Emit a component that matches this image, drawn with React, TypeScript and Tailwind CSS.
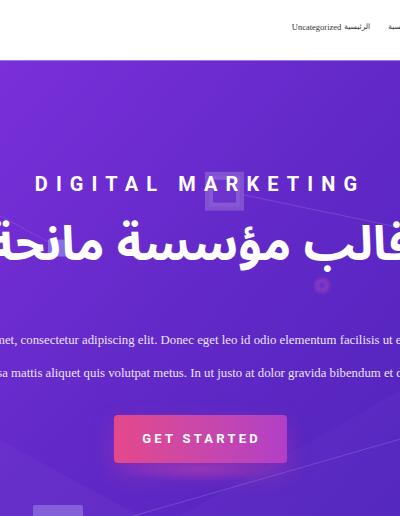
import React from "react";

function HeroShapes() {
  return (
    <svg
      className="absolute inset-0 h-full w-full"
      viewBox="0 0 400 456"
      preserveAspectRatio="none"
      aria-hidden="true"
    >
      <defs>
        <radialGradient id="ring" cx="50%" cy="50%" r="50%">
          <stop offset="0%" stopColor="#7a3fd0" stopOpacity="0.2" />
          <stop offset="45%" stopColor="#d05ab8" stopOpacity="0.35" />
          <stop offset="100%" stopColor="#d05ab8" stopOpacity="0" />
        </radialGradient>
        <radialGradient id="glow" cx="50%" cy="50%" r="50%">
          <stop offset="0%" stopColor="#e050a8" stopOpacity="0.3" />
          <stop offset="100%" stopColor="#e050a8" stopOpacity="0" />
        </radialGradient>
      </defs>
      {/* soft background panels */}
      <polygon points="0,380 140,456 0,456" fill="#ffffff" fillOpacity="0.03" />
      <polygon points="180,456 400,330 400,456" fill="#ffffff" fillOpacity="0.02" />
      {/* lines */}
      <line x1="243" y1="134" x2="400" y2="167" stroke="#ffffff" strokeOpacity="0.18" strokeWidth="0.8" />
      <line x1="0" y1="155" x2="55" y2="185" stroke="#ffffff" strokeOpacity="0.15" strokeWidth="0.8" />
      <line x1="133" y1="456" x2="400" y2="379" stroke="#ffffff" strokeOpacity="0.2" strokeWidth="0.8" />
      {/* outlined square behind title */}
      <rect x="209" y="115" width="31" height="31" fill="#ffffff" fillOpacity="0.05" stroke="#ffffff" strokeOpacity="0.18" strokeWidth="8" />
      {/* small filled square */}
      <rect x="48" y="179" width="20" height="17" fill="#8f86ee" fillOpacity="0.75" />
      {/* ring */}
      <circle cx="322" cy="225" r="10" fill="url(#ring)" />
      {/* button glow */}
      <ellipse cx="200" cy="410" rx="80" ry="12" fill="url(#glow)" />
      {/* bottom-left tile */}
      <rect x="33" y="445" width="50" height="14" rx="2" fill="#a89cf0" fillOpacity="0.45" />
    </svg>
  );
}

export default function App() {
  return (
    <div className="h-[516px] w-[400px] overflow-hidden bg-white">
      <header className="flex h-[60px] items-center justify-end bg-white pb-[6px]">
        <nav className="flex items-center gap-[18px] font-['Liberation_Serif','DejaVu_Serif',serif] text-[8.5px] text-[#333333]">
          <span className="flex items-center gap-[3px]">
            <span>Uncategorized</span>
            <span dir="rtl" className="font-['DejaVu_Sans',sans-serif] text-[7.5px]">
              الرئيسية
            </span>
          </span>
          <span dir="rtl" className="-mr-[14px] font-['DejaVu_Sans',sans-serif] text-[7.5px]">
            الرئيسية
          </span>
        </nav>
      </header>

      <section className="relative h-[456px] overflow-hidden border-t border-[#9b78e0] bg-gradient-to-br from-[#7a2fd9] via-[#6229c8] to-[#5224bd]">
        <HeroShapes />
        <div className="relative flex flex-col items-center pt-[111px]">
          <h3 className="whitespace-nowrap font-['Roboto','Inter',sans-serif] text-[20px] font-bold leading-6 tracking-[0.405em] text-white">
            DIGITAL MARKETING
          </h3>
          <div className="flex w-full justify-center">
            <h1
              dir="rtl"
              className="mt-[21px] shrink-0 whitespace-nowrap font-['Noto_Sans_Arabic','DejaVu_Sans',sans-serif] text-[48px] font-bold leading-[56px] text-white"
            >
              قالب مؤسسة مانحة
            </h1>
          </div>
          <div className="mt-[51px] flex w-full flex-col font-['Liberation_Serif','Times_New_Roman',serif] text-[12.8px] leading-[33px] text-[#ece4fb]">
            <p className="-ml-[128px] whitespace-nowrap">
              Lorem ipsum dolor sit amet, consectetur adipiscing elit. Donec eget leo id odio elementum facilisis ut et sapien.
            </p>
            <p className="-ml-[55px] whitespace-nowrap">
              Nulla massa mattis aliquet quis volutpat metus. In ut justo at dolor gravida bibendum et dui.
            </p>
          </div>
          <button className="mt-[25px] flex h-[48px] w-[173px] items-center justify-center rounded-[4px] bg-gradient-to-r from-[#e4488a] to-[#b13fc6] pl-[0.25em] font-['Roboto','Inter',sans-serif] text-[13px] font-bold tracking-[0.25em] text-white shadow-[0_10px_24px_rgba(225,70,160,0.3)]">
            GET STARTED
          </button>
        </div>
      </section>
    </div>
  );
}
